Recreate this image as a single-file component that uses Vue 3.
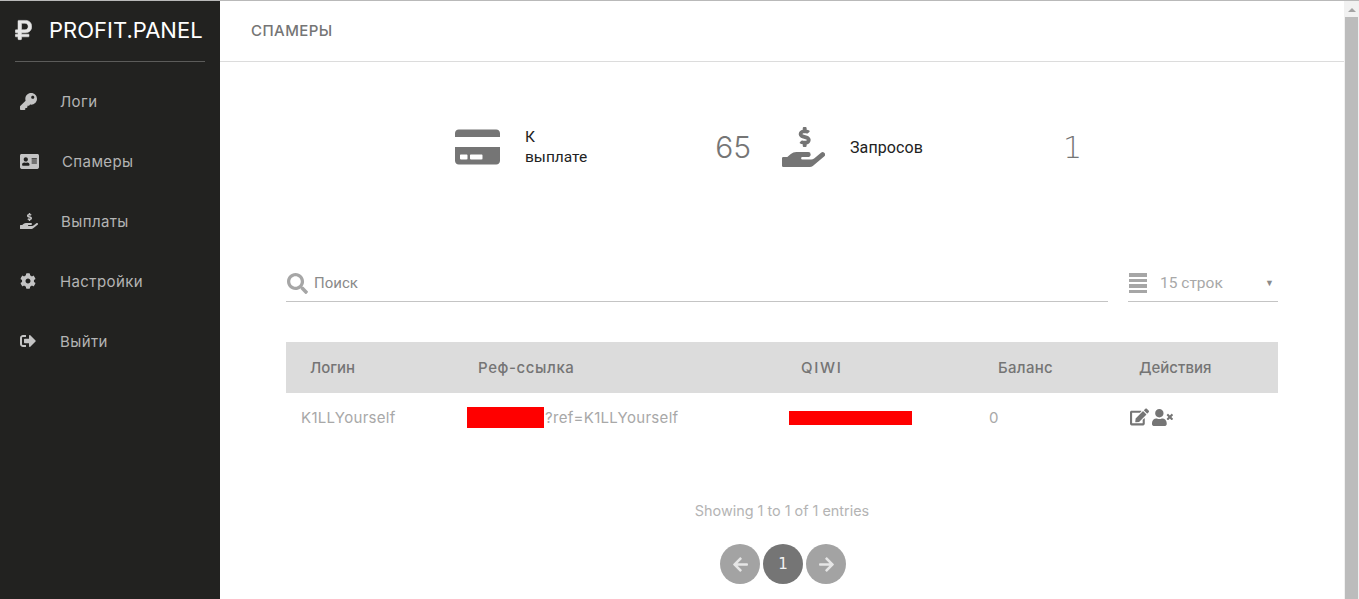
<script setup>
const icons = {
  key: { vb: '0 0 512 512', d: 'M512 176.001C512 273.203 433.202 352 336 352c-11.22 0-22.19-1.062-32.827-3.069l-24.012 27.014A23.999 23.999 0 0 1 261.223 384H224v40c0 13.255-10.745 24-24 24h-40v40c0 13.255-10.745 24-24 24H24c-13.255 0-24-10.745-24-24v-78.059c0-6.365 2.529-12.47 7.029-16.971l161.802-161.802C163.108 213.814 160 195.271 160 176 160 78.798 238.797.001 335.999 0 433.488-.001 512 78.511 512 176.001zM336 128c0 26.51 21.49 48 48 48s48-21.49 48-48-21.49-48-48-48-48 21.49-48 48z' },
  idCard: { vb: '0 0 576 512', d: 'M528 32H48C21.5 32 0 53.5 0 80v352c0 26.5 21.5 48 48 48h480c26.5 0 48-21.5 48-48V80c0-26.5-21.5-48-48-48zm-352 96c35.3 0 64 28.7 64 64s-28.7 64-64 64-64-28.7-64-64 28.7-64 64-64zm112 236.8c0 10.6-10 19.2-22.4 19.2H86.4C74 384 64 375.4 64 364.8v-19.2c0-31.8 30.1-57.6 67.2-57.6h5c12.3 5.1 25.7 8 39.8 8s27.6-2.9 39.8-8h5c37.1 0 67.2 25.8 67.2 57.6v19.2zM512 312c0 4.4-3.6 8-8 8H360c-4.4 0-8-3.6-8-8v-16c0-4.4 3.6-8 8-8h144c4.4 0 8 3.6 8 8v16zm0-64c0 4.4-3.6 8-8 8H360c-4.4 0-8-3.6-8-8v-16c0-4.4 3.6-8 8-8h144c4.4 0 8 3.6 8 8v16zm0-64c0 4.4-3.6 8-8 8H360c-4.4 0-8-3.6-8-8v-16c0-4.4 3.6-8 8-8h144c4.4 0 8 3.6 8 8v16z' },
  hand: { vb: '0 0 576 512', d: 'M271.06,144.3l54.27,14.3a8.59,8.59,0,0,1,6.63,8.1c0,4.6-4.09,8.4-9.12,8.4h-35.6a30,30,0,0,1-11.19-2.2c-5.24-2.2-11.28-1.7-15.3,2l-19,17.5a11.68,11.68,0,0,0-2.25,2.66,11.42,11.42,0,0,0,3.88,15.74,83.77,83.77,0,0,0,34.51,11.5V240c0,8.8,7.83,16,17.37,16h17.37c9.55,0,17.38-7.2,17.38-16V222.4c32.93-3.6,57.84-31,53.5-63-3.15-23-22.46-41.3-46.56-47.7L282.68,97.4a8.59,8.59,0,0,1-6.63-8.1c0-4.6,4.09-8.4,9.12-8.4h35.6A30,30,0,0,1,332,83.1c5.23,2.2,11.28,1.7,15.3-2l19-17.5A11.31,11.31,0,0,0,368.47,61a11.43,11.43,0,0,0-3.84-15.78,83.82,83.82,0,0,0-34.52-11.5V16c0-8.8-7.82-16-17.37-16H295.37C285.82,0,278,7.2,278,16V33.6c-32.89,3.6-57.85,31-53.51,63C227.63,119.6,247,137.9,271.06,144.3ZM565.27,328.1c-11.8-10.7-30.2-10-42.6,0L430.27,402a63.64,63.64,0,0,1-40,14H272a16,16,0,0,1,0-32h78.29c15.9,0,30.71-10.9,33.25-26.6a31.2,31.2,0,0,0,.46-5.46A32,32,0,0,0,352,320H192a117.66,117.66,0,0,0-74.1,26.29L71.4,384H16A16,16,0,0,0,0,400v96a16,16,0,0,0,16,16H372.77a64,64,0,0,0,40-14L564,377a32,32,0,0,0,1.28-48.9Z' },
  cog: { vb: '0 0 512 512', d: 'M487.4 315.7l-42.6-24.6c4.3-23.2 4.3-47 0-70.2l42.6-24.6c4.9-2.8 7.1-8.6 5.5-14-11.1-35.6-30-67.8-54.7-94.6-3.8-4.1-10-5.1-14.8-2.3L380.8 110c-17.9-15.4-38.5-27.3-60.8-35.1V25.8c0-5.6-3.9-10.5-9.4-11.7-36.7-8.2-74.3-7.8-109.2 0-5.5 1.2-9.4 6.1-9.4 11.7V75c-22.2 7.9-42.8 19.8-60.8 35.1L88.7 85.5c-4.9-2.8-11-1.9-14.8 2.3-24.7 26.7-43.6 58.9-54.7 94.6-1.7 5.4.6 11.2 5.5 14L67.3 221c-4.3 23.2-4.3 47 0 70.2l-42.6 24.6c-4.9 2.8-7.1 8.6-5.5 14 11.1 35.6 30 67.8 54.7 94.6 3.8 4.1 10 5.1 14.8 2.3l42.6-24.6c17.9 15.4 38.5 27.3 60.8 35.1v49.2c0 5.6 3.9 10.5 9.4 11.7 36.7 8.2 74.3 7.8 109.2 0 5.5-1.2 9.4-6.1 9.4-11.7v-49.2c22.2-7.9 42.8-19.8 60.8-35.1l42.6 24.6c4.9 2.8 11 1.9 14.8-2.3 24.7-26.7 43.6-58.9 54.7-94.6 1.5-5.5-.7-11.3-5.6-14.1zM256 336c-44.1 0-80-35.9-80-80s35.9-80 80-80 80 35.9 80 80-35.9 80-80 80z' },
  out: { vb: '0 0 512 512', d: 'M497 273L329 441c-15 15-41 4.5-41-17v-96H152c-13.3 0-24-10.7-24-24v-96c0-13.3 10.7-24 24-24h136V88c0-21.4 25.9-32 41-17l168 168c9.3 9.4 9.3 24.6 0 34zM192 436v-40c0-6.6-5.4-12-12-12H96c-17.7 0-32-14.3-32-32V160c0-17.7 14.3-32 32-32h84c6.6 0 12-5.4 12-12V76c0-6.6-5.4-12-12-12H96c-53 0-96 43-96 96v192c0 53 43 96 96 96h84c6.6 0 12-5.4 12-12z' },
  card: { vb: '0 0 576 512', d: 'M0 432c0 26.5 21.5 48 48 48h480c26.5 0 48-21.5 48-48V256H0v176zm192-68c0-6.6 5.4-12 12-12h136c6.6 0 12 5.4 12 12v40c0 6.6-5.4 12-12 12H204c-6.6 0-12-5.4-12-12v-40zm-128 0c0-6.6 5.4-12 12-12h72c6.6 0 12 5.4 12 12v40c0 6.6-5.4 12-12 12H76c-6.6 0-12-5.4-12-12v-40zM576 80v48H0V80c0-26.5 21.5-48 48-48h480c26.5 0 48 21.5 48 48z' },
  search: { vb: '0 0 512 512', d: 'M505 442.7L405.3 343c-4.5-4.5-10.6-7-17-7H372c27.6-35.3 44-79.7 44-128C416 93.1 322.9 0 208 0S0 93.1 0 208s93.1 208 208 208c48.3 0 92.7-16.4 128-44v16.3c0 6.4 2.5 12.5 7 17l99.7 99.7c9.4 9.4 24.6 9.4 33.9 0l28.3-28.3c9.4-9.4 9.4-24.6.1-34zM208 336c-70.7 0-128-57.2-128-128 0-70.7 57.2-128 128-128 70.7 0 128 57.2 128 128 0 70.7-57.2 128-128 128z' },
  edit: { vb: '0 0 576 512', d: 'M402.6 83.2l90.2 90.2c3.8 3.8 3.8 10 0 13.8L274.4 405.6l-92.8 10.3c-12.4 1.4-22.9-9.1-21.5-21.5l10.3-92.8L388.8 83.2c3.8-3.8 10-3.8 13.8 0zm162-22.9l-48.8-48.8c-15.2-15.2-39.9-15.2-55.2 0l-35.4 35.4c-3.8 3.8-3.8 10 0 13.8l90.2 90.2c3.8 3.8 10 3.8 13.8 0l35.4-35.4c15.2-15.3 15.2-40 0-55.2zM384 346.2V448H64V128h229.8c3.2 0 6.2-1.3 8.5-3.5l40-40c7.6-7.6 2.2-20.5-8.5-20.5H48C21.5 64 0 85.5 0 112v352c0 26.5 21.5 48 48 48h352c26.5 0 48-21.5 48-48V306.2c0-10.7-12.9-16-20.5-8.5l-40 40c-2.2 2.3-3.5 5.3-3.5 8.5z' },
  userX: { vb: '0 0 640 512', d: 'M589.6 240l45.6-45.6c6.3-6.3 6.3-16.5 0-22.8l-22.8-22.8c-6.3-6.3-16.5-6.3-22.8 0L544 194.4l-45.6-45.6c-6.3-6.3-16.5-6.3-22.8 0l-22.8 22.8c-6.3 6.3-6.3 16.5 0 22.8l45.6 45.6-45.6 45.6c-6.3 6.3-6.3 16.5 0 22.8l22.8 22.8c6.3 6.3 16.5 6.3 22.8 0l45.6-45.6 45.6 45.6c6.3 6.3 16.5 6.3 22.8 0l22.8-22.8c6.3-6.3 6.3-16.5 0-22.8L589.6 240zM224 256c70.7 0 128-57.3 128-128S294.7 0 224 0 96 57.3 96 128s57.3 128 128 128zm89.6 32h-16.7c-22.2 10.2-46.9 16-72.9 16s-50.6-5.8-72.9-16h-16.7C60.2 288 0 348.2 0 422.4V464c0 26.5 21.5 48 48 48h352c26.5 0 48-21.5 48-48v-41.6c0-74.2-60.2-134.4-134.4-134.4z' },
  left: { vb: '0 0 448 512', d: 'M257.5 445.1l-22.2 22.2c-9.4 9.4-24.6 9.4-33.9 0L7 273c-9.4-9.4-9.4-24.6 0-33.9L201.4 44.7c9.4-9.4 24.6-9.4 33.9 0l22.2 22.2c9.5 9.5 9.3 25-.4 34.3L136.6 216H424c13.3 0 24 10.7 24 24v32c0 13.3-10.7 24-24 24H136.6l120.5 114.8c9.8 9.3 10 24.8.4 34.3z' },
  right: { vb: '0 0 448 512', d: 'M190.5 66.9l22.2-22.2c9.4-9.4 24.6-9.4 33.9 0L441 239c9.4 9.4 9.4 24.6 0 33.9L246.6 467.3c-9.4 9.4-24.6 9.4-33.9 0l-22.2-22.2c-9.5-9.5-9.3-25 .4-34.3L311.4 296H24c-13.3 0-24-10.7-24-24v-32c0-13.3 10.7-24 24-24h287.4L190.9 101.2c-9.8-9.3-10-24.8-.4-34.3z' },
  ruble: { vb: '0 0 384 512', d: 'M239.36 320C324.48 320 384 260.542 384 175.071S324.48 32 239.36 32H76c-6.627 0-12 5.373-12 12v206.632H12c-6.627 0-12 5.373-12 12V308c0 6.627 5.373 12 12 12h52v32H12c-6.627 0-12 5.373-12 12v39.252c0 6.627 5.373 12 12 12h52V468c0 6.627 5.373 12 12 12h58.56c6.627 0 12-5.373 12-12v-52.748H308c6.627 0 12-5.373 12-12V364c0-6.627-5.373-12-12-12H146.56v-32h92.8zm-92.8-219.744h78.72c46.72 0 74.88 29.567 74.88 74.815 0 45.552-28.16 75.372-76.16 75.372h-77.44V100.256z' }
}

const menu = [
  { label: 'Логи', icon: icons.key, w: 17, col: 45 },
  { label: 'Спамеры', icon: icons.idCard, w: 19, col: 47 },
  { label: 'Выплаты', icon: icons.hand, w: 18, col: 46 },
  { label: 'Настройки', icon: icons.cog, w: 16, col: 45 },
  { label: 'Выйти', icon: icons.out, w: 16, col: 45 }
]
</script>

<template>
  <div class="app">
    <aside class="sidebar">
      <div class="brand">
        <svg class="brand-icon" :viewBox="icons.ruble.vb"><path :d="icons.ruble.d" /></svg>
        <span class="brand-name">PROFIT.PANEL</span>
      </div>
      <nav class="menu">
        <a v-for="item in menu" :key="item.label" class="menu-item">
          <span class="menu-icon" :style="{ flexBasis: item.col + 'px' }">
            <svg :viewBox="item.icon.vb" :width="item.w" :height="item.w"><path :d="item.icon.d" /></svg>
          </span>
          <span>{{ item.label }}</span>
        </a>
      </nav>
    </aside>

    <main class="main">
      <header class="topbar">СПАМЕРЫ</header>
      <div class="content">
        <section class="stats">
          <div class="stat stat-first">
            <svg class="stat-icon" :viewBox="icons.card.vb"><path :d="icons.card.d" /></svg>
            <span class="stat-label">К<br />выплате</span>
            <span class="stat-value">65</span>
          </div>
          <div class="stat stat-second">
            <svg class="stat-icon" :viewBox="icons.hand.vb" preserveAspectRatio="none"><path :d="icons.hand.d" /></svg>
            <span class="stat-label">Запросов</span>
            <span class="stat-value num">1</span>
          </div>
        </section>

        <section class="filters">
          <div class="filter search">
            <svg class="search-icon" :viewBox="icons.search.vb"><path :d="icons.search.d" /></svg>
            <span>Поиск</span>
          </div>
          <div class="filter rows">
            <span class="bars"><i></i><i></i><i></i><i></i></span>
            <span class="rows-label">15 строк</span>
            <span class="caret">▼</span>
          </div>
        </section>

        <table class="table">
          <colgroup>
            <col class="c1" /><col class="c2" /><col class="c3" /><col class="c4" /><col class="c5" />
          </colgroup>
          <thead>
            <tr>
              <th>Логин</th>
              <th class="th-ref">Реф-ссылка</th>
              <th class="th-qiwi">QIWI</th>
              <th class="th-bal">Баланс</th>
              <th>Действия</th>
            </tr>
          </thead>
          <tbody>
            <tr>
              <td>K1LLYourself</td>
              <td><span class="ref"><span class="mask mask-a"></span><span>?ref=K1LLYourself</span></span></td>
              <td><span class="mask mask-b"></span></td>
              <td>0</td>
              <td>
                <span class="actions">
                  <svg class="act-edit" :viewBox="icons.edit.vb"><path :d="icons.edit.d" /></svg>
                  <svg class="act-user" :viewBox="icons.userX.vb"><path :d="icons.userX.d" /></svg>
                </span>
              </td>
            </tr>
          </tbody>
        </table>

        <p class="info">Showing 1 to 1 of 1 entries</p>

        <div class="pager">
          <span class="page">
            <svg :viewBox="icons.left.vb"><path :d="icons.left.d" /></svg>
          </span>
          <span class="page active num">1</span>
          <span class="page">
            <svg :viewBox="icons.right.vb"><path :d="icons.right.d" /></svg>
          </span>
        </div>
      </div>
    </main>

    <div class="scrollbar">
      <span class="scroll-arrow"></span>
      <span class="scroll-thumb"></span>
    </div>
  </div>
</template>

<style>
html, body { margin: 0; overflow: hidden; }
</style>

<style scoped>
.app {
  display: flex;
  width: 1359px;
  height: 599px;
  overflow: hidden;
  box-sizing: border-box;
  border-top: 1px solid #b9b9b9;
  background: #fff;
  font-family: Inter, "Liberation Sans", sans-serif;
}
.sidebar {
  flex: 0 0 220px;
  background: #222220;
  padding: 0 15px;
  box-sizing: border-box;
}
.brand {
  display: flex;
  align-items: center;
  height: 58px;
  padding-bottom: 2px;
  border-bottom: 1px solid #5c5c5a;
  width: 190px;
}
.brand-icon { width: 17px; height: 22px; fill: #e6e6e6; stroke: #e6e6e6; stroke-width: 12; margin-right: 17px; }
.brand-name { color: #fff; font-size: 22px; white-space: nowrap; }
.menu { display: flex; flex-direction: column; padding-top: 9px; }
.menu-item {
  display: flex;
  align-items: center;
  height: 60px;
  color: #b4b4b4;
  font-size: 15px;
  letter-spacing: 0.4px;
}
.menu-icon {
  flex: 0 0 45px;
  padding-left: 5px;
  box-sizing: border-box;
  display: flex;
  align-items: center;
}
.menu-icon svg { fill: #c4c4c4; }

.main { flex: 1; min-width: 0; display: flex; flex-direction: column; }
.topbar {
  height: 61px;
  flex: none;
  box-sizing: border-box;
  display: flex;
  align-items: center;
  padding: 0 0 2px 31px;
  border-bottom: 1px solid #dcdcdc;
  color: #757575;
  font-size: 15px;
  font-weight: 500;
  letter-spacing: 0.45px;
}
.content { padding: 0 66px; }

.stats { display: flex; gap: 31px; padding: 60px 0 0 169px; height: 60px; }
.stat { display: flex; align-items: center; height: 50px; }
.stat-first { width: 296px; }
.stat-second { width: 298px; }
.stat-icon { width: 45px; height: 40px; fill: #757575; flex: none; margin-right: 25px; }
.stat-second .stat-icon { width: 43px; }
.stat-label {
  font-family: Roboto, sans-serif;
  font-size: 15.5px;
  line-height: 20px;
  color: #222;
  flex: 1;
}
.stat-second .stat-label { font-size: 16px; letter-spacing: 0.1px; padding-top: 2px; }
.stat-value { font-size: 30px; color: #757575; font-weight: 300; }
.stat-second .stat-value { margin-right: -2px; }
.num { font-family: "DejaVu Sans", sans-serif; }

.filters { display: flex; gap: 20px; margin-top: 79px; }
.filter {
  display: flex;
  align-items: center;
  height: 36px;
  padding-top: 4px;
  border-bottom: 1px solid #c4c4c4;
  font-family: Roboto, sans-serif;
  font-size: 15px;
  color: #8a8a8a;
}
.search { flex: 1; }
.search-icon { width: 21px; height: 21px; fill: #a6a6a6; margin: 0 6px 0 1px; }
.rows { flex: 0 0 150px; font-size: 15.5px; }
.bars { display: flex; flex-direction: column; gap: 2px; width: 18px; margin: 0 13px 0 1px; }
.bars i { display: block; height: 3.5px; background: #a6a6a6; }
.rows-label { flex: 1; color: #a8a8a8; }
.caret { font-size: 9px; color: #8a8a8a; margin-right: 4px; }

.table {
  width: 992px;
  table-layout: fixed;
  border-collapse: collapse;
  margin-top: 40px;
}
.c1 { width: 166px; }
.c2 { width: 322px; }
.c3 { width: 200px; }
.c4 { width: 141px; }
.c5 { width: 163px; }
th {
  height: 51px;
  background: #dcdcdc;
  color: #757575;
  font-size: 15px;
  font-weight: 500;
  text-align: left;
  padding: 0 0 0 24px;
}
.th-ref { padding-left: 26px; letter-spacing: 0.6px; }
.th-qiwi { padding-left: 27px; letter-spacing: 1.7px; }
.th-bal { letter-spacing: 0.3px; }
td {
  height: 48px;
  padding: 0 0 2px 15px;
  color: #a8a8a8;
  font-size: 15px;
  letter-spacing: 0.3px;
  white-space: nowrap;
}
.ref { display: flex; align-items: center; }
.mask { display: inline-block; background: #f00; vertical-align: middle; }
.mask-a { width: 77px; height: 21px; margin-right: 1px; }
.mask-b { width: 123px; height: 14px; }
.actions { display: flex; align-items: center; gap: 3px; }
.actions svg { fill: #757575; display: block; }
.act-edit { width: 19px; height: 18px; }
.act-user { width: 21px; height: 17px; }

.info { margin: 58px 0 0; text-align: center; font-size: 14.4px; line-height: 20px; color: #b4b4b4; }
.pager { display: flex; justify-content: center; gap: 3px; margin-top: 23px; padding-left: 2px; }
.page {
  width: 40px;
  height: 40px;
  border-radius: 50%;
  background: #a3a3a3;
  color: #f2f2f2;
  display: flex;
  align-items: center;
  justify-content: center;
  font-size: 15px;
}
.page svg { width: 17px; height: 17px; fill: #e6e6e6; }
.page.active { background: #757575; }

.scrollbar {
  flex: 0 0 15px;
  background: #f1f1f1;
  display: flex;
  flex-direction: column;
  align-items: center;
  padding: 0 1px;
  box-sizing: border-box;
}
.scroll-arrow {
  width: 0;
  height: 0;
  margin-top: 7px;
  margin-bottom: 5px;
  border-left: 4px solid transparent;
  border-right: 4px solid transparent;
  border-bottom: 4px solid #a3a3a3;
}
.scroll-thumb { align-self: stretch; flex: 1; background: #bcbcbc; }
</style>
